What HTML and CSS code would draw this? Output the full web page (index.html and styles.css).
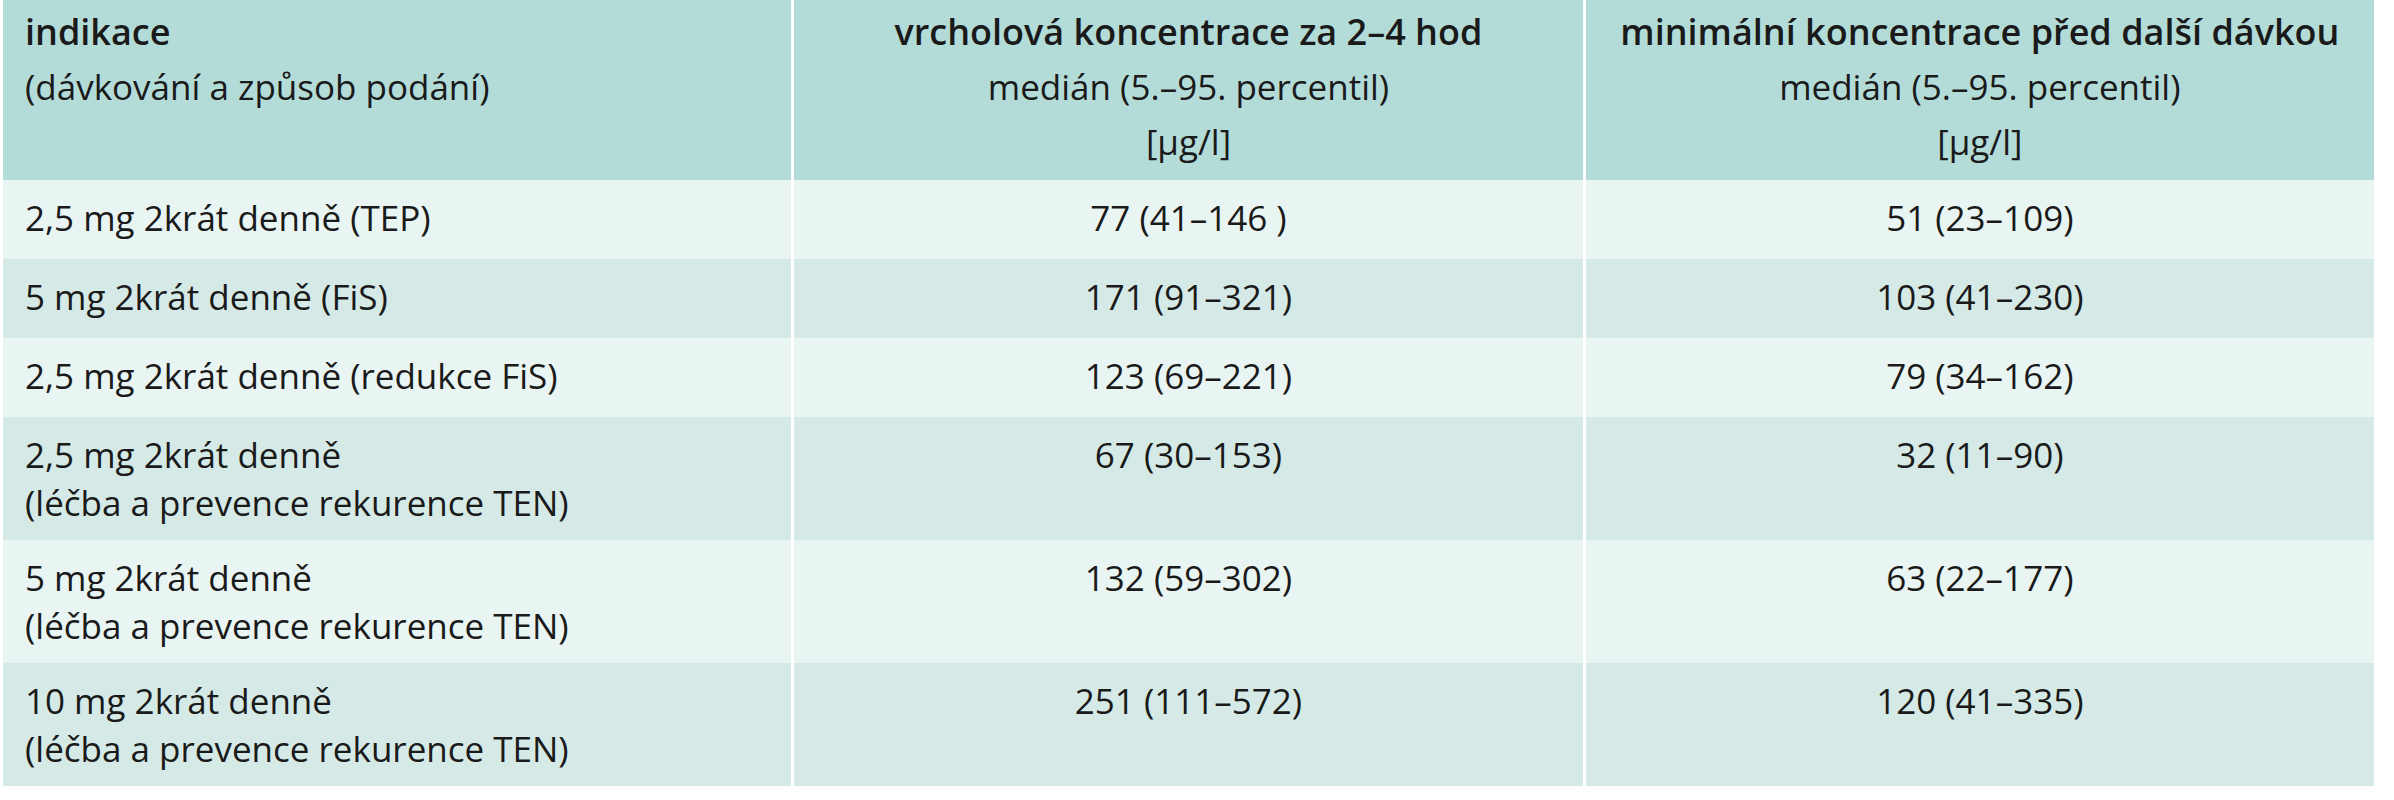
FILE: index.html
```html
<!DOCTYPE html>
<html lang="cs">
<head>
<meta charset="utf-8">
<title>Koncentrace</title>
<link rel="stylesheet" href="styles.css">
</head>
<body>
<table class="conc">
  <thead>
    <tr class="head">
      <th class="c-left"><span class="b">indikace</span><br>(dávkování a způsob podání)</th>
      <th class="c-mid"><span class="b">vrcholová koncentrace za 2–4 hod</span><br>medián (5.–95. percentil)<br>[µg/l]</th>
      <th class="c-mid"><span class="b">minimální koncentrace před další dávkou</span><br>medián (5.–95. percentil)<br>[µg/l]</th>
    </tr>
  </thead>
  <tbody>
    <tr class="light">
      <td class="c-left">2,5 mg 2krát denně (TEP)</td>
      <td class="c-mid">77 (41–146 )</td>
      <td class="c-mid">51 (23–109)</td>
    </tr>
    <tr class="dark">
      <td class="c-left">5 mg 2krát denně (FiS)</td>
      <td class="c-mid">171 (91–321)</td>
      <td class="c-mid">103 (41–230)</td>
    </tr>
    <tr class="light">
      <td class="c-left">2,5 mg 2krát denně (redukce FiS)</td>
      <td class="c-mid">123 (69–221)</td>
      <td class="c-mid">79 (34–162)</td>
    </tr>
    <tr class="dark tall">
      <td class="c-left">2,5 mg 2krát denně<br>(léčba a prevence rekurence TEN)</td>
      <td class="c-mid">67 (30–153)</td>
      <td class="c-mid">32 (11–90)</td>
    </tr>
    <tr class="light tall">
      <td class="c-left">5 mg 2krát denně<br>(léčba a prevence rekurence TEN)</td>
      <td class="c-mid">132 (59–302)</td>
      <td class="c-mid">63 (22–177)</td>
    </tr>
    <tr class="dark tall">
      <td class="c-left">10 mg 2krát denně<br>(léčba a prevence rekurence TEN)</td>
      <td class="c-mid">251 (111–572)</td>
      <td class="c-mid">120 (41–335)</td>
    </tr>
  </tbody>
</table>
</body>
</html>
```

FILE: styles.css
```css
html, body {
  margin: 0;
  padding: 0;
  background: #ffffff;
}

.conc {
  width: 2377px;
  border-collapse: separate;
  border-spacing: 3px 0;
  table-layout: fixed;
  font-family: "Open Sans", "Noto Sans", "DejaVu Sans", sans-serif;
  font-size: 35px;
  color: #1a1a1a;
}

.conc th,
.conc td {
  vertical-align: top;
  font-weight: 400;
}

.head th {
  background: #b3dcd9;
  line-height: 55px;
  padding: 4px 22px 11px 22px;
}

.conc td {
  line-height: 48px;
  padding: 14px 22px 17px 22px;
}

.conc .tall td {
  padding-bottom: 13px;
}

.c-left {
  text-align: left;
}

.c-mid {
  text-align: center;
}

.b {
  font-weight: 600;
  font-size: 36px;
}

.light td {
  background: #e9f5f3;
}

.dark td {
  background: #d5eae7;
}
```
